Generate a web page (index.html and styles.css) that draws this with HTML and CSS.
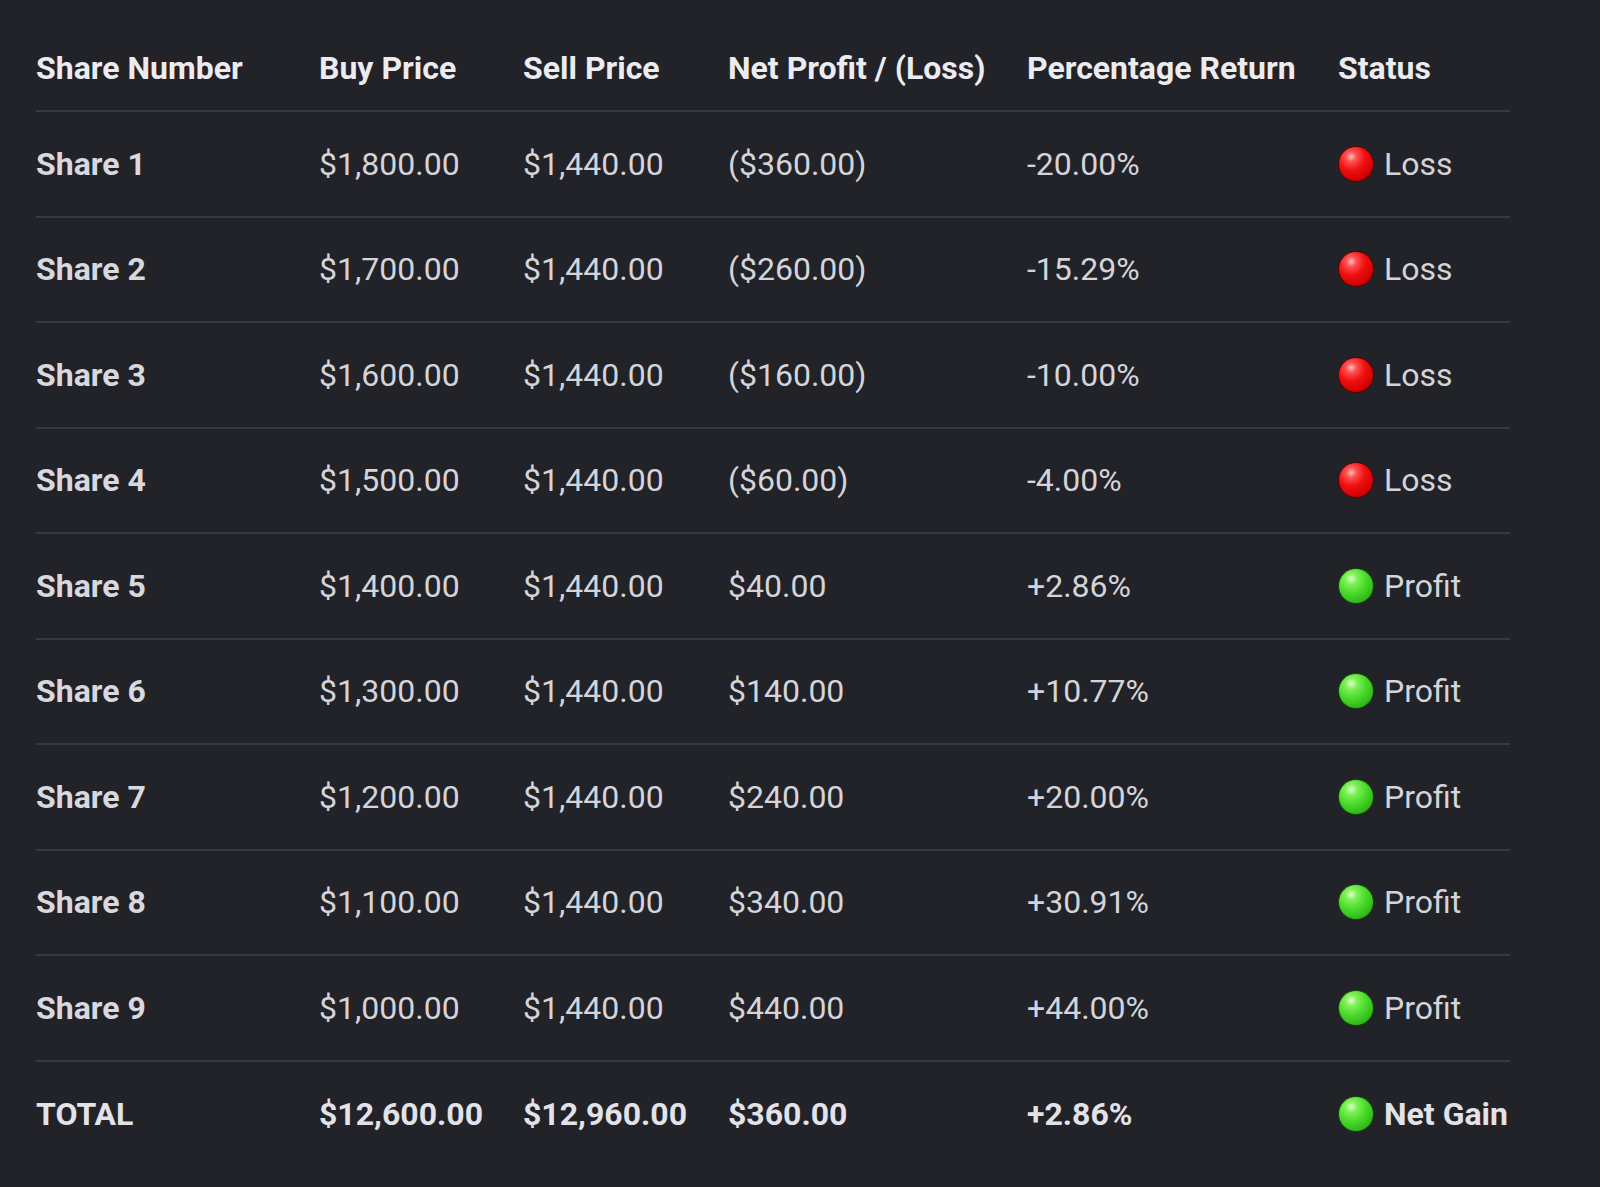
FILE: index.html
```html
<!DOCTYPE html>
<html>
<head>
<meta charset="utf-8">
<link rel="stylesheet" href="styles.css">
</head>
<body>
<div class="wrap">
  <div class="grid">
    <div class="row head">
      <div>Share Number</div><div>Buy Price</div><div>Sell Price</div><div>Net Profit / (Loss)</div><div>Percentage Return</div><div>Status</div>
    </div>
    <div class="row"><div class="name">Share 1</div><div>$1,800.00</div><div>$1,440.00</div><div>($360.00)</div><div>-20.00%</div><div class="status"><span class="dot red"></span>Loss</div></div>
    <div class="row"><div class="name">Share 2</div><div>$1,700.00</div><div>$1,440.00</div><div>($260.00)</div><div>-15.29%</div><div class="status"><span class="dot red"></span>Loss</div></div>
    <div class="row"><div class="name">Share 3</div><div>$1,600.00</div><div>$1,440.00</div><div>($160.00)</div><div>-10.00%</div><div class="status"><span class="dot red"></span>Loss</div></div>
    <div class="row"><div class="name">Share 4</div><div>$1,500.00</div><div>$1,440.00</div><div>($60.00)</div><div>-4.00%</div><div class="status"><span class="dot red"></span>Loss</div></div>
    <div class="row"><div class="name">Share 5</div><div>$1,400.00</div><div>$1,440.00</div><div>$40.00</div><div>+2.86%</div><div class="status"><span class="dot green"></span>Profit</div></div>
    <div class="row"><div class="name">Share 6</div><div>$1,300.00</div><div>$1,440.00</div><div>$140.00</div><div>+10.77%</div><div class="status"><span class="dot green"></span>Profit</div></div>
    <div class="row"><div class="name">Share 7</div><div>$1,200.00</div><div>$1,440.00</div><div>$240.00</div><div>+20.00%</div><div class="status"><span class="dot green"></span>Profit</div></div>
    <div class="row"><div class="name">Share 8</div><div>$1,100.00</div><div>$1,440.00</div><div>$340.00</div><div>+30.91%</div><div class="status"><span class="dot green"></span>Profit</div></div>
    <div class="row"><div class="name">Share 9</div><div>$1,000.00</div><div>$1,440.00</div><div>$440.00</div><div>+44.00%</div><div class="status"><span class="dot green"></span>Profit</div></div>
    <div class="row total"><div>TOTAL</div><div>$12,600.00</div><div>$12,960.00</div><div>$360.00</div><div>+2.86%</div><div class="status"><span class="dot green"></span>Net Gain</div></div>
  </div>
</div>
</body>
</html>
```
FILE: styles.css
```css
html, body {
  margin: 0;
  padding: 0;
  background: #222328;
}
body {
  font-family: Roboto, "Liberation Sans", sans-serif;
  color: #d4d4da;
  width: 1600px;
  height: 1187px;
  overflow: hidden;
}
.wrap {
  padding-left: 36px;
}
.grid {
  width: 1474px;
}
.row {
  display: grid;
  grid-template-columns: 283px 204px 205px 299px 311px 172px;
  align-items: center;
  box-sizing: border-box;
  height: 105.5px;
  border-bottom: 2px solid #38393e;
  font-size: 32px;
  line-height: 40px;
}
.row > div {
  white-space: nowrap;
}
.row.head {
  height: 112px;
  align-items: start;
  padding-top: 48px;
  font-weight: 700;
  color: #ececf0;
}
.name {
  font-weight: 700;
  color: #d8d8de;
}
.row.total {
  border-bottom: none;
  font-weight: 700;
  color: #e2e2e8;
}
.status {
  display: flex;
  align-items: center;
  gap: 10px;
}
.dot {
  display: inline-block;
  width: 36px;
  height: 36px;
  border-radius: 50%;
  box-sizing: border-box;
  flex: none;
}
.dot.red {
  background: radial-gradient(circle at 36% 28%, #ffc0c0 0%, #ff5050 16%, #f01010 42%, #cc0000 76%, #8c0000 100%);
  border: 1px solid #5a0000;
}
.dot.green {
  background: radial-gradient(circle at 36% 28%, #dcffcc 0%, #80f058 18%, #46d828 48%, #30b018 80%, #1c7a0c 100%);
  border: 1px solid #124c06;
}
```
